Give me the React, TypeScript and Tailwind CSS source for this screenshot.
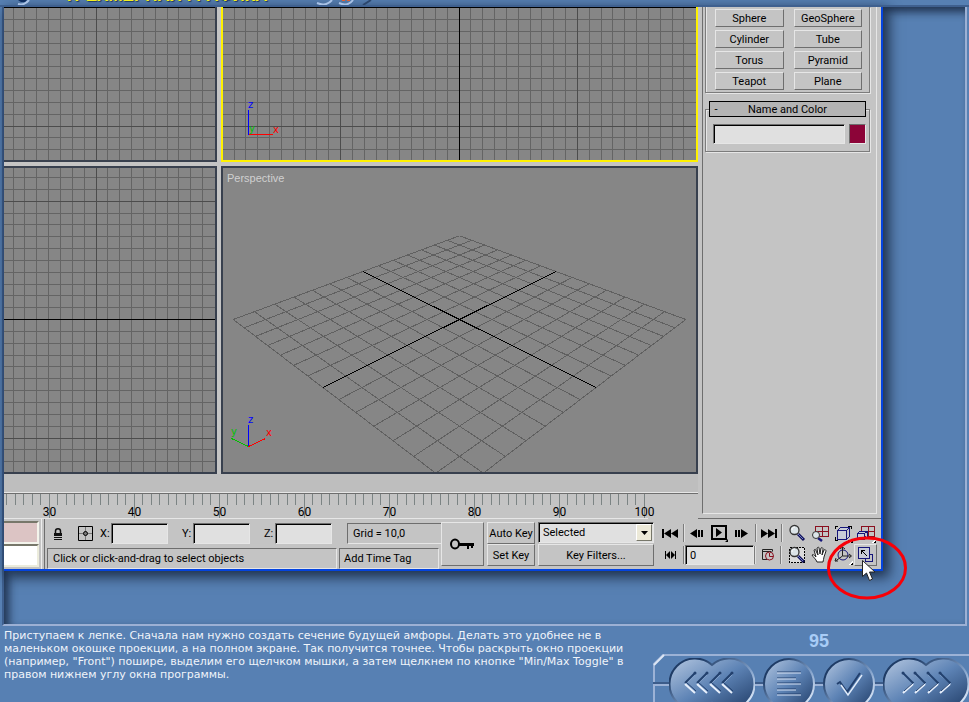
import { FC, ReactNode } from "react";

const PITCH = 11.84;

const primitives = [
  "Sphere",
  "GeoSphere",
  "Cylinder",
  "Tube",
  "Torus",
  "Pyramid",
  "Teapot",
  "Plane",
];

const raised =
  "border border-t-[#e6e6e6] border-l-[#e6e6e6] border-b-[#6e6e6e] border-r-[#6e6e6e]";
const sunken =
  "border border-t-[#6e6e6e] border-l-[#6e6e6e] border-b-[#e6e6e6] border-r-[#e6e6e6]";
const field =
  "border border-t-[#6e6e6e] border-l-[#6e6e6e] border-b-[#e6e6e6] border-r-[#e6e6e6] bg-[#e0e0e0] shadow-[inset_1px_1px_0_#000] outline-none";

interface IGridView {
  x: number;
  y: number;
  width: number;
  height: number;
  originX: number;
  originY: number;
  axis: "x" | "y";
  children?: ReactNode;
}

const GridView: FC<IGridView> = ({ x, y, width, height, originX, originY, axis, children }) => {
  const cols = [];
  const rows = [];
  for (let i = -40; i <= 40; i++) {
    const cx = Math.floor(originX + i * PITCH) + 0.5;
    const cy = Math.floor(originY + i * PITCH) + 0.5;
    if (cx > x + 1 && cx < x + width - 2) cols.push({ i, at: cx });
    if (cy > y && cy < y + height - 2) rows.push({ i, at: cy });
  }
  const isMajor = (l: { i: number }) => l.i % 10 === 0;

  return (
    <svg
      className="block w-full h-full"
      viewBox={`${x} ${y} ${width} ${height}`}
      preserveAspectRatio="xMidYMid slice"
      shapeRendering="crispEdges"
    >
      {[false, true].map((major) => (
        <g key={String(major)} stroke={major ? "#4c4c4c" : "#646464"}>
          {cols.filter((l) => isMajor(l) === major).map((l) => (
            <line key={`c${l.i}`} x1={l.at} x2={l.at} y1={y} y2={y + height} />
          ))}
          {rows.filter((l) => isMajor(l) === major).map((l) => (
            <line key={`r${l.i}`} x1={x} x2={x + width} y1={l.at} y2={l.at} />
          ))}
        </g>
      ))}
      {rows.filter((l) => l.i === 0).map((l) => (
        <line key="h" x1={x} x2={x + width} y1={l.at} y2={l.at} stroke="#000" />
      ))}
      {axis === "y" && (
        <line x1={originX + 0.5} x2={originX + 0.5} y1={y} y2={y + height} stroke="#000" />
      )}
      {children}
    </svg>
  );
};

// a and b are ground plane coordinates, -7..7
const project = (a: number, b: number) => {
  const w = 1 - 0.0246 * (a + b);
  return [459.5 + (16.16 * (a - b)) / w, 319.5 + (8.04 * (a + b)) / w];
};

const groundLine = (a1: number, b1: number, a2: number, b2: number) => {
  const [x1, y1] = project(a1, b1);
  const [x2, y2] = project(a2, b2);
  return { x1, y1, x2, y2 };
};

const PerspectiveView: FC = () => {
  const steps = Array.from({ length: 15 }, (_, i) => i - 7);
  return (
    <svg
      className="block w-full h-full"
      viewBox="223 168 473 304"
      preserveAspectRatio="xMidYMid slice"
      shapeRendering="crispEdges"
    >
      <g stroke="#606060">
        {steps.map((s) => (
          <g key={s}>
            <line {...groundLine(s, -7, s, 7)} />
            <line {...groundLine(-7, s, 7, s)} />
          </g>
        ))}
      </g>
      <g stroke="#000">
        <line {...groundLine(0, -7, 0, 7)} />
        <line {...groundLine(-7, 0, 7, 0)} />
      </g>
      <path d="M248.5 425v22" stroke="#00f" />
      <path d="M248.500 446.500l17-8" stroke="#f00" />
      <path d="M248.500 446.500l-17-8" stroke="#00c000" />
      <g fontFamily="DejaVu Sans, sans-serif" fontSize="10">
        <text x="248" y="423" fill="#00f">z</text>
        <text x="266" y="436" fill="#f00">x</text>
        <text x="231" y="435" fill="#00c000">y</text>
      </g>
      <text x="227" y="182" fill="#d0d0d0" fontSize="11" fontFamily="Liberation Sans, sans-serif">
        Perspective
      </text>
    </svg>
  );
};

const Ruler: FC = () => {
  const ticks = Array.from({ length: 76 }, (_, i) => i + 25);
  return (
    <svg className="block w-full h-[27px]" viewBox="4 492 694 27" preserveAspectRatio="xMinYMin slice">
      <g shapeRendering="crispEdges">
        <path d="M4 492.500h694" stroke="#e6e6e6" />
        <path d="M4 493.500h694" stroke="#6e6e6e" />
        <path d="M4 518.500h644" stroke="#e6e6e6" />
        {ticks.map((t) => {
          const x = Math.floor(49 + (t - 30) * 8.5) + 0.5;
          return (
            <line key={t} x1={x} x2={x} y1={494} y2={t % 10 ? 505 : 518} stroke="#7c8484" />
          );
        })}
      </g>
      <g fontFamily="Roboto, Liberation Sans, sans-serif" fontSize="12" textAnchor="middle">
        {ticks.filter((t) => t % 10 === 0).map((t) => (
          <text key={t} x={49.5 + (t - 30) * 8.5} y="516">{t}</text>
        ))}
      </g>
    </svg>
  );
};

const Separator: FC = () => (
  <span className="w-0.5 h-[18px] shrink-0 border-l border-l-[#7c7c7c] border-r border-r-[#e0e0e0]" />
);

const Coordinate: FC<{ axis: string }> = ({ axis }) => (
  <label className="flex items-center mr-3.5">
    <span className="w-[11px]">{axis}:</span>
    <input type="text" className={`w-[57px] h-[21px] px-1 ${field}`} />
  </label>
);

const IconButton: FC<{ label: string; className?: string; children: ReactNode }> = ({
  label,
  className = "",
  children,
}) => (
  <button type="button" aria-label={label} className={`h-[22px] flex items-center justify-center ${className}`}>
    {children}
  </button>
);

const ViewIcon: FC<{ children: ReactNode }> = ({ children }) => (
  <svg width="20" height="20" viewBox="0 0 20 20" fill="none" shapeRendering="crispEdges">
    {children}
  </svg>
);

const Lens: FC = () => (
  <g shapeRendering="auto">
    <path d="M11 11l6 6" stroke="#10105c" strokeWidth="3" />
    <path d="M11 11l5 5" stroke="#7080c0" />
    <circle cx="7.500" cy="7" r="4.500" fill="#dce4e8" stroke="#333" strokeWidth="1.300" />
    <path d="M5 7c0-2 1-3 3-3" stroke="#fff" />
  </g>
);

const SmallLens: FC = () => (
  <g shapeRendering="auto">
    <path d="M8 15l4 3" stroke="#16167a" strokeWidth="2.500" />
    <circle cx="6" cy="12" r="3.500" fill="#dce4e8" stroke="#333" />
  </g>
);

const Corner: FC = () => (
  <>
    <path d="M20 15v5h-5z" fill="#fff" />
    <path d="M20 17v3h-3z" fill="#000" />
  </>
);

const Playback: FC = () => (
  <div className="w-[125px] ml-1 flex flex-col">
    <div className="flex items-center h-[22px]">
      <IconButton label="Go to start" className="w-[25px]">
        <svg width="17" height="9" viewBox="0 0 17 9">
          <path d="M0 0h2v9H0zM9 0v9L2 4.500zM16 0v9L9 4.500z" />
        </svg>
      </IconButton>
      <Separator />
      <IconButton label="Previous frame" className="w-6">
        <svg width="14" height="9" viewBox="0 0 14 9">
          <path d="M7 0v9L0 4.500zM8 1h2v7H8zM11 1h2v7h-2z" />
        </svg>
      </IconButton>
      <IconButton label="Play" className="w-5">
        <svg width="18" height="18" viewBox="0 0 18 18">
          <path d="M2 2h14v13H2z" fill="none" stroke="#000" strokeWidth="2" />
          <path d="M6 4v9l6-4.500zM18 15v3h-3z" />
        </svg>
      </IconButton>
      <IconButton label="Next frame" className="w-[26px]">
        <svg width="14" height="9" viewBox="0 0 14 9">
          <path d="M0 1h2v7H0zM3 1h2v7H3zM6 0l7 4.500L6 9z" />
        </svg>
      </IconButton>
      <Separator />
      <IconButton label="Go to end" className="w-6">
        <svg width="17" height="9" viewBox="0 0 17 9">
          <path d="M0 0l7 4.500L0 9zM7 0l7 4.500L7 9zM14 0h2v9h-2z" />
        </svg>
      </IconButton>
      <Separator />
    </div>
    <div className="flex items-center h-[22px]">
      <IconButton label="Key mode" className="w-[25px]">
        <svg width="11" height="8" viewBox="0 0 11 8">
          <path d="M0 0h1v8H0zM5 0v8L1 4zM6 0l4 4-4 4zM10 0h1v8h-1z" />
        </svg>
      </IconButton>
      <Separator />
      <input
        type="text"
        aria-label="Current frame"
        defaultValue="0"
        className={`w-[69px] h-5 pl-1 ${field}`}
      />
      <Separator />
      <IconButton label="Time configuration" className="w-6">
        <svg width="14" height="14" viewBox="0 0 14 14" fill="none">
          <path d="M6 11.500H1.500v-10h10v2M1.500 3.500h9" stroke="#222" />
          <circle cx="8.500" cy="8" r="4" stroke="#8a1020" />
          <path d="M8.500 5v3.500H12" stroke="#8a1020" />
        </svg>
      </IconButton>
      <Separator />
    </div>
  </div>
);

const ViewControls: FC = () => (
  <div className="w-[92px] ml-0.5 mr-1 grid grid-cols-4 content-start">
    <IconButton label="Zoom">
      <ViewIcon><Lens /></ViewIcon>
    </IconButton>
    <IconButton label="Zoom all">
      <ViewIcon>
        <path d="M5.500 3.500h13v10h-13zM12 3v11M5 8.500h14" stroke="#8a1020" />
        <SmallLens />
      </ViewIcon>
    </IconButton>
    <IconButton label="Zoom extents">
      <ViewIcon>
        <path d="M2 6V3h3M15 3h3v3M2 14v3h3M15 17h2" stroke="#000" />
        <path d="M4.500 7.500h9v9h-9zM4.500 7.500l3-3h9l-3 3M16.500 4.500v9l-3 3" fill="#c8ccd8" stroke="#16167a" />
        <Corner />
      </ViewIcon>
    </IconButton>
    <IconButton label="Zoom extents all">
      <ViewIcon>
        <path d="M5.500 3.500h13v10h-13zM12 3v11M5 8.500h14" stroke="#8a1020" />
        <path d="M1.500 10.500h7v6h-7zM1.500 10.500l2-2h8l-3 2M11.500 8.500v5l-3 3" fill="#c8ccd8" stroke="#16167a" />
        <Corner />
      </ViewIcon>
    </IconButton>
    <IconButton label="Region zoom">
      <ViewIcon>
        <path d="M2.500 2.500h15v15h-15z" fill="#dcdcdc" stroke="#000" strokeDasharray="2 1" />
        <Lens />
      </ViewIcon>
    </IconButton>
    <IconButton label="Pan">
      <svg width="18" height="18" viewBox="0 0 18 18" fill="#fff" stroke="#222">
        <path d="M6 16c-1-3-4-5-5-7 1-1 2 0 4 2L3 4c1-1 2-1 2 1l2 4-1-7c1-1 2-1 2 0l1 6 1-6c1-1 2 0 2 1l-1 6 2-5c1-1 2 0 2 1l-2 6c0 2-1 3-1 5z" />
      </svg>
    </IconButton>
    <IconButton label="Arc rotate">
      <ViewIcon>
        <g shapeRendering="auto">
          <circle cx="10" cy="10" r="5" stroke="#16167a" />
          <path d="M9.500 2v9l-7 5M9.500 11H18M7 4l2.500-2L12 4M16 9l2.500 2-2.500 2M3 13l-1 3h3" stroke="#222" />
        </g>
        <Corner />
      </ViewIcon>
    </IconButton>
    <div className="relative">
      <IconButton label="Min/Max Toggle" className={`w-full ${raised}`}>
        <svg width="16" height="16" viewBox="0 0 16 16" fill="none" shapeRendering="crispEdges">
          <path d="M12 7.500h2.500v7h-7V12" stroke="#16167a" />
          <path d="M.5.5h11v11H.5z" fill="#c8ccd8" stroke="#16167a" />
          <path d="M3.500 7V3.500H7M4 4l5 5" stroke="#000" />
        </svg>
      </IconButton>
      <svg
        className="absolute -left-[27px] -top-2 w-[80px] h-[64px] pointer-events-none"
        viewBox="0 0 80 64"
        fill="none"
      >
        <ellipse cx="40" cy="32" rx="38.500" ry="30" stroke="#f80008" strokeWidth="3" />
        <path d="M35.500 24.500v16l4-3.500 3 7.500 3-1.500-3-7h5.500z" fill="#fff" stroke="#222" />
      </svg>
    </div>
  </div>
);

const ControlBar: FC = () => (
  <div className="flex h-[50px] pt-[3px]">
    <div className="w-[35px] h-[46px] -mt-px flex flex-col">
      <span className="h-[23px] bg-[#dcc4c4] border-t-2 border-t-[#77776a] border-b-2 border-b-[#f4f4ec] border-r-2 border-r-[#f4f4ec]" />
      <span className="h-[23px] bg-white border-t-2 border-t-[#77776a] border-b-2 border-b-[#ececdc] border-r-2 border-r-[#ececdc]" />
    </div>
    <span className="w-1 ml-0.5 -mt-[3px] border-l border-l-[#eee] border-r border-r-[#6e6e6e]" />

    <div className="flex-1 min-w-0 mt-px flex flex-col">
      <div className="flex items-center h-[21px] pl-2">
        <svg className="mr-[15px]" width="10" height="14" viewBox="0 0 10 14">
          <path d="M2.500 7V4c0-3 5-3 5 0v3" fill="none" stroke="#111" strokeWidth="1.500" />
          <path d="M1 6h8v3H1zM1 10h8v1H1zM1 12h8v1H1z" fill="#111" />
        </svg>
        <svg className="mr-[7px]" width="15" height="15" viewBox="0 0 15 15" fill="none">
          <path d="M.5.5h14v14H.5z" stroke="#000" />
          <path d="M1 7.500h13M7.500 1v13" stroke="#777" />
          <circle cx="7.500" cy="7.500" r="2" fill="#777" stroke="#000" />
        </svg>
        <Coordinate axis="X" />
        <Coordinate axis="Y" />
        <Coordinate axis="Z" />
        <span className={`w-[94px] ml-auto h-[21px] pl-[5px] flex items-center border-r-0 ${sunken}`}>
          Grid = 10,0
        </span>
      </div>
      <div className="flex gap-0.5 h-[21px] mt-1 pl-0.5 pr-0.5">
        <span className={`flex-1 min-w-0 pl-[5px] flex items-center ${sunken}`}>
          Click or click-and-drag to select objects
        </span>
        <span className={`w-[100px] pl-1 flex items-center ${sunken}`}>Add Time Tag</span>
      </div>
    </div>

    <IconButton label="Set keys" className={`w-[43px] h-[44px] ${raised}`}>
      <svg width="25" height="12" viewBox="0 0 25 12" fill="none">
        <ellipse cx="5" cy="6" rx="4" ry="4.500" stroke="#000" strokeWidth="2" />
        <path d="M9 5h15v3h-1v2h-2V8h-2v3h-2V8H9z" fill="#000" />
      </svg>
    </IconButton>
    <div className="w-12 h-[44px] ml-[3px] flex flex-col whitespace-nowrap">
      <button type="button" className={`h-[22px] ${raised}`}>Auto Key</button>
      <button type="button" className={`h-[22px] ${raised}`}>Set Key</button>
    </div>
    <div className="w-[116px] h-[44px] ml-[3px] flex flex-col justify-between">
      <div className={`flex h-[21px] p-px ${field}`}>
        <select
          aria-label="Selection set"
          className="flex-1 min-w-0 pl-[3px] appearance-none outline-none"
        >
          <option>Selected</option>
        </select>
        <span className="w-4 flex items-center justify-center bg-[#ece9d8] border border-t-white border-l-white border-b-[#77776a] border-r-[#77776a]">
          <svg width="7" height="4" viewBox="0 0 7 4">
            <path d="M0 0h7L3.500 4z" />
          </svg>
        </span>
      </div>
      <button type="button" className={`h-[22px] ${raised}`}>Key Filters...</button>
    </div>
    <Playback />
    <ViewControls />
  </div>
);

const CommandPanel: FC = () => (
  <div className="w-[183px] shrink-0 pl-1 pr-1 pb-1 border-b border-b-[#6e6e6e]">
    <div className="h-[507px] pl-0.5 pr-1.5 border-l border-l-[#6e6e6e] border-r border-r-[#e6e6e6] border-b border-b-[#e6e6e6]">
      <div className="h-[86px] pt-0.5 pl-[9px] pr-[7px] grid grid-cols-2 gap-x-2.5 gap-y-[3px] content-start border border-t-0 border-[#7c7c7c] shadow-[1px_1px_0_#e6e6e6,inset_1px_0_0_#e6e6e6]">
        {primitives.map((name) => (
          <button key={name} type="button" className={`h-[18px] ${raised}`}>
            {name}
          </button>
        ))}
      </div>
      <div className="h-[43px] mt-4 px-[3px] border border-[#7c7c7c] shadow-[1px_1px_0_#e6e6e6,inset_1px_1px_0_#e6e6e6]">
        <button
          type="button"
          className="relative flex items-center w-full h-4 -mt-[9px] bg-[#b4b4b4] border border-black"
        >
          <span className="w-3 text-center">-</span>
          <span className="flex-1 pr-3">Name and Color</span>
        </button>
        <div className="flex gap-1 mt-[7px] pl-1">
          <input type="text" aria-label="Name" className={`flex-1 min-w-0 h-5 px-1 ${field}`} />
          <button type="button" aria-label="Color" className={`w-[17px] h-5 bg-[#8c0438] ${sunken}`} />
        </div>
      </div>
    </div>
  </div>
);

const EditorWindow: FC = () => (
  <div className="bg-[#c4c4c4] border-r-2 border-b-2 border-[#0444e0] text-[11px] leading-[13px] text-black font-['Roboto','Liberation_Sans',sans-serif] shadow-[4px_4px_12px_2px_rgba(10,20,40,0.75)]">
    <div className="flex">
      <div className="flex-1 min-w-0">
        <div className="flex gap-1">
          <div className="w-[213px] h-[155px] bg-[#868686] border-r-2 border-b-2 border-[#38404e]">
            <GridView x={4} y={7} width={211} height={153} originX={96} originY={7.6} axis="x" />
          </div>
          <div className="flex-1 min-w-0 h-[155px] bg-[#868686] border-2 border-t-0 border-[#fff200]">
            <GridView x={223} y={7} width={473} height={153} originX={459} originY={7.6} axis="y">
              <path d="M248.500 110v25" stroke="#00f" />
              <path d="M249 134.500h24" stroke="#f00" />
              <g fontFamily="DejaVu Sans, sans-serif" fontSize="10">
                <text x="248" y="108" fill="#00f">z</text>
                <text x="249" y="132" fill="#00c000">y</text>
                <text x="273" y="133" fill="#f00">x</text>
              </g>
            </GridView>
          </div>
        </div>
        <div className="flex gap-1 mt-1">
          <div className="w-[213px] h-[308px] bg-[#868686] border-2 border-l-0 border-[#38404e]">
            <GridView x={4} y={168} width={211} height={304} originX={96} originY={319.6} axis="x" />
          </div>
          <div className="flex-1 min-w-0 h-[308px] bg-[#868686] border-2 border-[#38404e]">
            <PerspectiveView />
          </div>
        </div>
        <div className="h-[18px] bg-[#bebebe]" />
        <Ruler />
      </div>
      <CommandPanel />
    </div>
    <ControlBar />
  </div>
);

const TitleStrip: FC = () => (
  <header className="relative h-[7px] overflow-hidden border-b-2 border-b-[#3f608f]">
    <h1 className="absolute left-[64px] bottom-px text-[17px] leading-4 font-bold whitespace-nowrap text-[#f4f020] font-['Liberation_Sans',sans-serif] [text-shadow:1px_1px_1px_#203860]">
      ТРЕХМЕРНАЯ ГРАФИКА
    </h1>
    <svg className="absolute left-0 top-0" width="380" height="7" viewBox="0 0 380 7" fill="none">
      <g stroke="#a9c2e6" strokeWidth="2">
        <path d="M18 4q6 2 11-4M317 3q9 4 15-3M339 3q9 4 14-3" />
      </g>
      <path d="M18 0h9l-2 2h-4z" fill="#0c2c60" />
      <path d="M342 0h3M347 0h3" stroke="#e06030" strokeWidth="2" />
      <path d="M371 0l-8 5" stroke="#2c466c" strokeWidth="2" />
    </svg>
  </header>
);

const ORB = "M26 1A25 25 0 1 0 26 51A25 25 0 1 0 26 1Z";
const DOUBLE_ORB = "M43 7A25.500 25.500 0 1 0 43 45A25.500 25.500 0 1 0 43 7Z";

const OrbButton: FC<{ label: string; wide?: boolean; children: ReactNode }> = ({
  label,
  wide,
  children,
}) => (
  <button type="button" aria-label={label} className="shrink-0">
    <svg width={wide ? 86 : 52} height="52" viewBox={wide ? "0 0 86 52" : "0 0 52 52"} fill="none">
      <path d={wide ? DOUBLE_ORB : ORB} fill="url(#orb)" stroke="url(#orbRim)" strokeWidth="2" />
      {children}
    </svg>
  </button>
);

const LEFT_CHEVRONS = [16, 28, 41, 53];
const RIGHT_CHEVRONS = [30, 42, 55, 67];

const Chevrons: FC<{ mirrored?: boolean }> = ({ mirrored }) => {
  const dir = mirrored ? -1 : 1;
  return (
    <>
      {(mirrored ? RIGHT_CHEVRONS : LEFT_CHEVRONS).map((x) => (
        <g key={x}>
          <path d={`M${x + 11 * dir} 16L${x + 1} 26`} stroke="#8aa8d0" />
          <path d={`M${x + 10 * dir} 15L${x} 25`} stroke="#23416e" strokeWidth="2" />
          <path d={`M${x} 26l${10 * dir} 9`} stroke="#e8f0fc" strokeWidth="2" />
          <path d={`M${x + 1} 24l${10 * dir} 9`} stroke="#23416e" />
          <circle cx={x + 10 * dir} cy="15" r="1.500" fill="#23416e" />
        </g>
      ))}
    </>
  );
};

const LessonNav: FC = () => (
  <nav className="relative w-[316px] shrink-0 h-[76px] overflow-hidden">
    <p className="pt-1.5 pl-[16px] text-center text-[18px] leading-[18px] font-bold text-[#a8ccf6] font-['Liberation_Sans',sans-serif]">
      95
    </p>
    <svg className="absolute left-0 top-[27px]" width="316" height="50" viewBox="0 0 316 50" fill="none">
      <path d="M1 50V11L10 2h306" stroke="#9cb2d6" strokeWidth="2" />
      <path d="M1 12L11 2" stroke="#dce6f4" strokeWidth="2" />
      <path d="M0 30h316" stroke="#3c5c8a" strokeWidth="2" />
      <path d="M0 32h316" stroke="#9cb2d6" strokeWidth="2" />
      <defs>
        <linearGradient id="orb" x1="0" y1="0" x2="1" y2="1">
          <stop offset="0.100" stopColor="#a4bad8" />
          <stop offset="0.500" stopColor="#5d83b5" />
          <stop offset="0.900" stopColor="#2c4a76" />
        </linearGradient>
        <linearGradient id="orbRim" x1="0" y1="0" x2="1" y2="1">
          <stop offset="0.200" stopColor="#1f3c66" />
          <stop offset="0.600" stopColor="#86a4cc" />
          <stop offset="0.900" stopColor="#dce8f8" />
        </linearGradient>
      </defs>
    </svg>
    <div className="relative flex gap-2 pl-4 mt-2">
      <OrbButton label="Назад" wide>
        <Chevrons />
      </OrbButton>
      <OrbButton label="Содержание">
        <path d="M14 14h24M14 20h19M14 25h24M14 31h19M14 36h24" stroke="#22406e" />
        <path d="M14 15h24M14 21h19M14 26h24M14 32h19M14 37h24" stroke="#d8e4f6" />
      </OrbButton>
      <OrbButton label="Готово">
        <path d="M14 26l3-2 7 10 13-19" stroke="#22406e" strokeWidth="2" />
        <path d="M18 27l7 10 14-20" stroke="#e0ebfa" strokeWidth="1.500" />
      </OrbButton>
      <OrbButton label="Вперёд" wide>
        <Chevrons mirrored />
      </OrbButton>
    </div>
  </nav>
);

const App: FC = () => (
  <div className="min-h-screen flex flex-col bg-[#5780b3] overflow-hidden">
    <TitleStrip />
    <main className="ml-0.5 mr-0.5 pr-[82px] pb-[53px] border-l-2 border-l-[#3f608f] border-r-2 border-r-[#9cb0d4] border-b-2 border-b-[#9cb0d4] shadow-[inset_5px_5px_8px_rgba(10,20,40,0.7)]">
      <EditorWindow />
    </main>
    <footer className="flex justify-between">
      <p className="pt-[3px] pl-1 text-[11px] leading-[13px] whitespace-nowrap text-[#f0f4fa] font-['DejaVu_Sans',sans-serif]">
        Приступаем к лепке. Сначала нам нужно создать сечение будущей амфоры. Делать это удобнее не в
        <br />
        маленьком окошке проекции, а на полном экране. Так получится точнее. Чтобы раскрыть окно проекции
        <br />
        (например, "Front") пошире, выделим его щелчком мышки, а затем щелкнем по кнопке "Min/Max Toggle" в
        <br />
        правом нижнем углу окна программы.
      </p>
      <LessonNav />
    </footer>
  </div>
);

export default App;
